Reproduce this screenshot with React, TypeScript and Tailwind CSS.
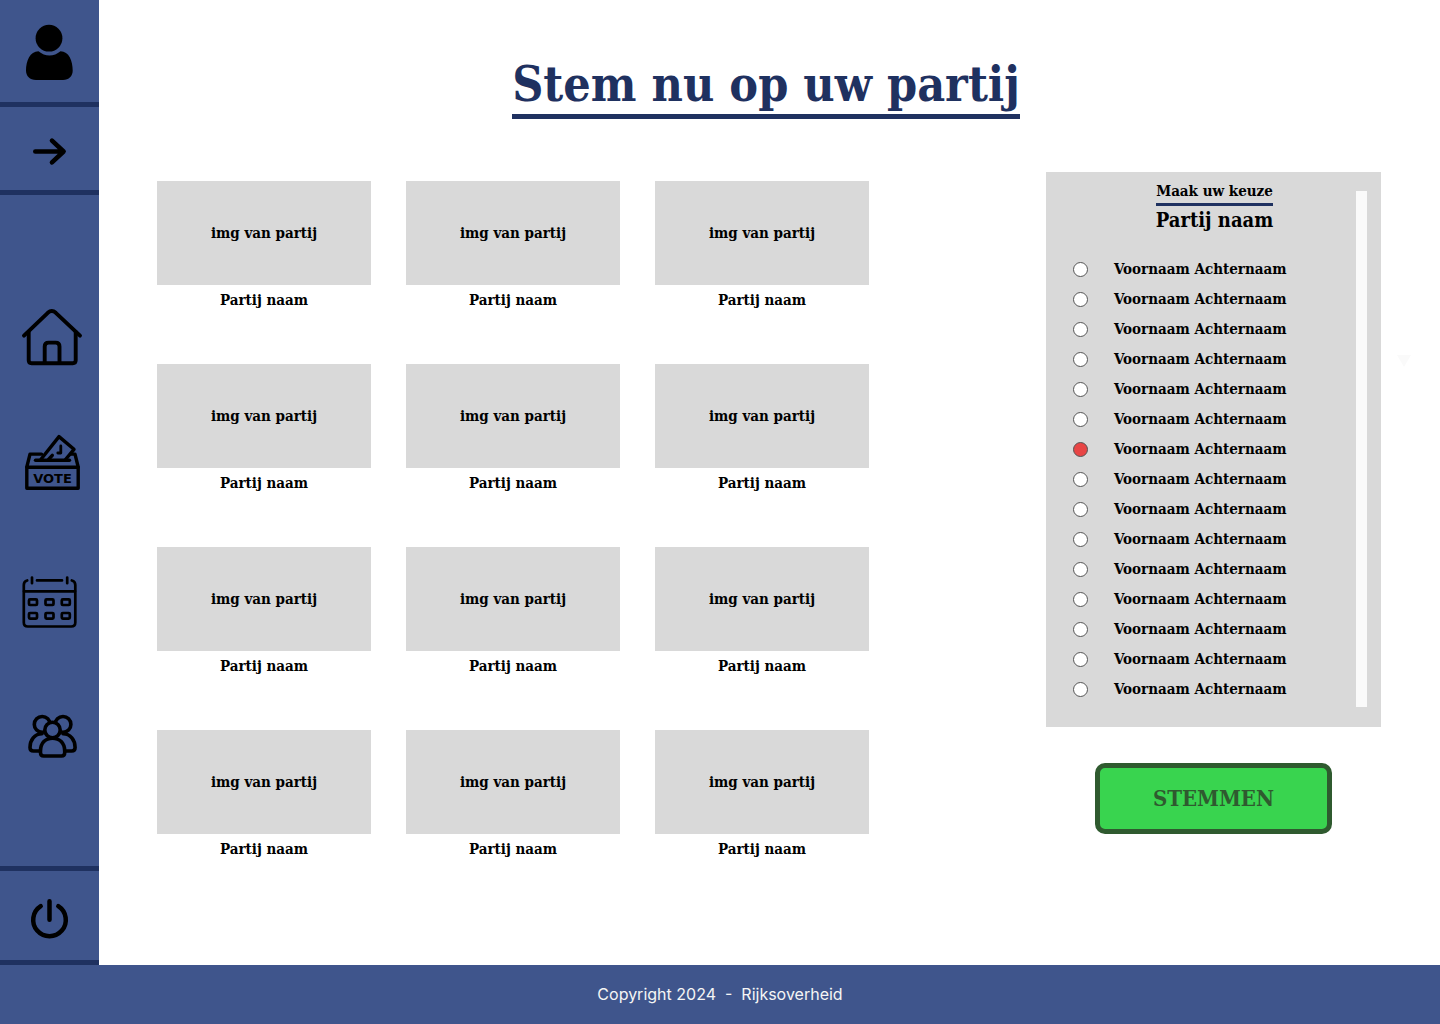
import { useState } from "react";
import type { ReactNode } from "react";

const parties = Array.from({ length: 12 }, (_, i) => i);
const candidates = Array.from({ length: 15 }, (_, i) => i);

type IconProps = { top: number; height: number; stroke: number; children: ReactNode };

function Icon({ top, height, stroke, children }: IconProps) {
  return (
    <svg
      className="block w-full"
      viewBox={`0 ${top} 99 ${height}`}
      fill="none"
      stroke="#000"
      strokeWidth={stroke}
      strokeLinecap="round"
      strokeLinejoin="round"
      aria-hidden="true"
    >
      {children}
    </svg>
  );
}

function Sidebar() {
  return (
    <aside className="flex w-[99px] shrink-0 flex-col bg-[#3f558c]">
      <button type="button" aria-label="Profiel" className="border-b-5 border-[#1f3160]">
        <Icon top={0} height={102} stroke={0}>
          <circle cx="49" cy="38.2" r="13.4" fill="#000" />
          <path
            fill="#000"
            d="M38.5 51.3C45 57 54 57 60.5 51.3C69 51.3 72.7 61 72.7 70.5C72.7 76 69 80 63 80H36C29.8 80 26 76 26 70.5C26 61 30 51.3 38.5 51.3Z"
          />
        </Icon>
      </button>
      <button type="button" aria-label="Menu openen" className="border-b-5 border-[#1f3160]">
        <Icon top={107} height={83} stroke={4.6}>
          <path d="M35.3 151.5H63M52 140.6L63.6 151.5L52 162.4" />
        </Icon>
      </button>
      <nav className="flex flex-1 flex-col gap-10 pt-[95px]">
        <a href="#home" aria-label="Home">
          <Icon top={290} height={90} stroke={3.9}>
            <path d="M24 335.7L47.8 312.8Q51.8 309.2 55.8 312.8L80 335.7" />
            <path d="M28.7 332V360.3Q28.7 363.2 31.6 363.2H72.8Q75.7 363.2 75.7 360.3V332" />
            <path d="M44.7 363V346.5Q44.7 342.6 48.6 342.6H55.6Q59.5 342.6 59.5 346.5V363" />
          </Icon>
        </a>
        <a href="#stemmen" aria-label="Stemmen">
          <Icon top={420} height={90} stroke={3.4}>
            <path d="M26.8 467.3H78.2V488.3H26.8Z" />
            <path d="M26.8 467L30 454.1H41.5M78.2 467L75 454.1H70.5" />
            <path d="M35.5 460.3H69.5" />
            <path d="M41 459.2L59 436.6L74 449.3L65.5 459.5M52.3 455.3L48.5 459.5" />
            <path d="M60.8 446V453H57.8" strokeWidth="2.8" />
            <text
              x="52.5"
              y="482.5"
              textAnchor="middle"
              fill="#000"
              stroke="none"
              className="font-['DejaVu_Sans',sans-serif] text-[13px] font-bold"
            >
              VOTE
            </text>
          </Icon>
        </a>
        <a href="#agenda" aria-label="Agenda">
          <Icon top={550} height={90} stroke={2.7}>
            <path d="M27.2 580.5Q23.8 581.4 23.8 585V622.5Q23.8 626.5 27.8 626.5H71.2Q75.3 626.5 75.3 622.5V585Q75.3 581.4 71.8 580.5" />
            <path d="M37 580.4H62M32 577.6V583.2M67.2 577.6V583.2M24 591.3H75" />
            {[602.2, 615.8].map((y) =>
              [33, 49.5, 65.8].map((x) => (
                <rect key={`${x}-${y}`} x={x - 4} y={y - 2.8} width="8" height="5.6" rx="1" />
              )),
            )}
          </Icon>
        </a>
        <a href="#partijen" aria-label="Partijen">
          <Icon top={680} height={90} stroke={3.6}>
            <circle cx="42.2" cy="724.4" r="7.9" />
            <circle cx="63" cy="724.4" r="7.9" />
            <path d="M42 733.8C34.5 733.8 30 740 30 747.5Q30 751 33.5 751H41" />
            <path d="M63 733.8C70.5 733.8 75.1 740 75.1 747.5Q75.1 751 71.6 751H64" />
            <circle cx="52.5" cy="730" r="7.7" fill="#3f558c" />
            <path
              fill="#3f558c"
              d="M40.5 751C40.5 743 45.5 738.2 52.5 738.2S64.7 743 64.7 751V752.8Q64.7 756 61.5 756H43.7Q40.5 756 40.5 752.8Z"
            />
          </Icon>
        </a>
      </nav>
      <button type="button" aria-label="Uitloggen" className="border-y-5 border-[#1f3160]">
        <Icon top={871} height={89} stroke={4.5}>
          <path d="M40.7 906.2A16.3 16.3 0 1 0 58.3 906.2M49.5 901.2V919.7" />
        </Icon>
      </button>
    </aside>
  );
}

export default function App() {
  const [selected, setSelected] = useState(6);

  return (
    <div className="flex min-h-screen flex-col bg-white font-['DejaVu_Serif_Condensed','DejaVu_Serif',serif] font-bold text-black">
      <div className="flex flex-1">
        <Sidebar />
        <main className="flex-1 pr-[59px] pl-[58px]">
          <header className="flex justify-center pt-[54px] pr-1.5">
            <h1 className="border-b-5 border-[#1f3160] text-5xl leading-[60px] text-[#1f3160]">
              Stem nu op uw partij
            </h1>
          </header>
          <div className="mt-[53px] flex justify-between gap-10">
            <ul className="mt-[9px] grid w-full max-w-[712px] grid-cols-3 content-start gap-x-[35px] gap-y-[50px]">
              {parties.map((i) => (
                <li key={i} className="text-center text-[15px] leading-5">
                  <button type="button" className="block w-full">
                    <span className="flex h-26 items-center justify-center bg-[#d9d9d9]">img van partij</span>
                    <span className="mt-1 block h-[25px] leading-[22px]">Partij naam</span>
                  </button>
                </li>
              ))}
            </ul>
            <form className="w-[335px] shrink-0" onSubmit={(e) => e.preventDefault()}>
              <div className="relative flex bg-[#d9d9d9] pt-2 pr-3.5 pb-5 pl-[27px]">
                <fieldset aria-label="Kies een kandidaat" className="flex-1 pb-[3px]">
                  <div className="flex flex-col items-center">
                    <h2 className="border-b-3 border-[#1f3160] text-[15px] leading-[23px]">Maak uw keuze</h2>
                    <h3 className="text-xl leading-7">Partij naam</h3>
                  </div>
                  <ul className="mt-5">
                    {candidates.map((i) => (
                      <li key={i}>
                        <label className="flex h-[30px] items-center gap-[26px] text-[15px]">
                          <input
                            type="radio"
                            name="kandidaat"
                            checked={selected === i}
                            onChange={() => setSelected(i)}
                            className="size-[15px] appearance-none rounded-full border border-[#555] bg-white checked:bg-[#e84545]"
                          />
                          Voornaam Achternaam
                        </label>
                      </li>
                    ))}
                  </ul>
                </fieldset>
                <div className="mt-[11px] w-[11px] bg-[#fafafa]" />
                <svg className="absolute top-[183px] -right-[30px] h-3 w-3.5" viewBox="0 0 14 12" aria-hidden="true">
                  <path d="M0 0H14L7 12Z" fill="#fafafa" />
                </svg>
              </div>
              <button
                type="submit"
                className="mx-auto mt-9 block h-[71px] w-[237px] rounded-[10px] border-5 border-[#2f5a2f] bg-[#39d44f] text-[22px] text-[#2f5a2f]"
              >
                STEMMEN
              </button>
            </form>
          </div>
        </main>
      </div>
      <footer className="bg-[#3f558c] py-[18px] text-center font-['Inter',sans-serif] text-base leading-[23px] font-normal whitespace-pre text-[#f5f5f5]">
        {"Copyright 2024  -  Rijksoverheid"}
      </footer>
    </div>
  );
}
